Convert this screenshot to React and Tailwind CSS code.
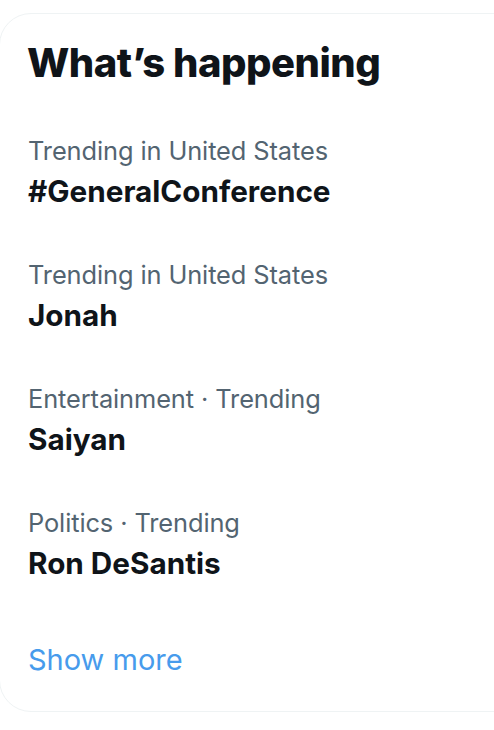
import React from 'react';

const trends = [
  { category: 'Trending in United States', name: '#GeneralConference' },
  { category: 'Trending in United States', name: 'Jonah' },
  { category: 'Entertainment · Trending', name: 'Saiyan' },
  { category: 'Politics · Trending', name: 'Ron DeSantis' },
];

const App = () => {
  return (
    <div className="w-[494px] h-[730px] overflow-hidden bg-white" style={{ fontFamily: 'Inter, "Noto Sans", sans-serif' }}>
      {/* Card */}
      <div className="mt-[13px] -ml-[1px] w-[540px] h-[699px] rounded-[32px] border border-[#eff3f4] bg-white">
        <h2 className="px-[27px] pt-[25px] pb-[22px] text-[40px] leading-[48px] font-extrabold text-[#0f1419] tracking-[-0.5px]">
          What’s happening
        </h2>

        {trends.map((t, i) => (
          <div key={i} className="px-[28px] py-[22px]">
            <div className="text-[25.4px] leading-[40px] text-[#536471] tracking-[-0.1px]">{t.category}</div>
            <div className="text-[29.7px] leading-[40px] font-bold text-[#0f1419]">{t.name}</div>
          </div>
        ))}

        <div className="px-[28px] pt-[35px]">
          <span className="text-[29px] leading-[40px] text-[#479bec]">Show more</span>
        </div>
      </div>
    </div>
  );
};

export default App;
